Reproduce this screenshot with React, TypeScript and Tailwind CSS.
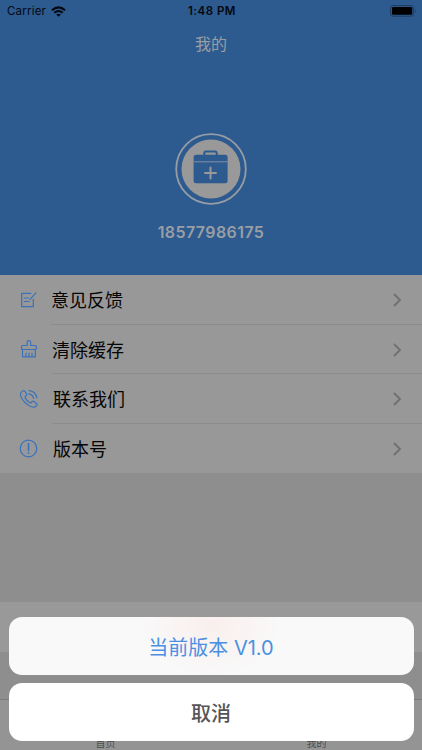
import type { ReactNode } from "react";

const line = {
  fill: "none",
  stroke: "#3a72ba",
  strokeWidth: 1.2,
  strokeLinecap: "round" as const,
  strokeLinejoin: "round" as const,
};

function FeedbackIcon() {
  return (
    <svg width="18" height="18" viewBox="0 0 18 18" {...line}>
      <path d="M10.800 2.300H1.700v13.400h11.600V8.400M4.300 7h4.200M4.300 10.500h5M15.900 1.900 10 8.300" />
    </svg>
  );
}

function BrushIcon() {
  return (
    <svg width="18" height="20" viewBox="0 0 18 20" {...line}>
      <path d="M7.200 6.500V3.200q0-1.600 1.700-1.600t1.700 1.600v3.300h4.700q1 0 1 1v2.200q0 .8-1 .8H2.500q-1 0-1-.8V7.500q0-1 1-1zM2.500 10.500v7.300h12.800v-7.300M6 14.200v3.600M9 14.200v3.600M12 14.200v3.600" />
    </svg>
  );
}

function PhoneIcon() {
  return (
    <svg width="20" height="20" viewBox="0 0 20 20" {...line}>
      <path d="M2.300 3.100 3.700 1.900q1.200-.8 2.200.4l1.700 2.500q.6 1-.3 1.800l-1 .9q-.6.600 0 1.600 1.500 2.700 4.200 4.500 1 .6 1.700-.1l.9-.9q.9-.7 1.800-.1l2.600 1.900q1 .9.200 2l-1.100 1.100q-1.600 1.300-4.300.3Q5.300 14.800 1.900 7.800 .8 4.800 2.300 3.100zM10 1.600q6.600.5 7.900 7.300M9.800 4.800q4 .4 4.900 4.700" />
    </svg>
  );
}

function InfoIcon() {
  return (
    <svg width="19" height="19" viewBox="0 0 19 19" {...line}>
      <circle cx="9.500" cy="9.500" r="8.300" />
      <path d="M9.500 4.600v7M9.500 13.900v.3" strokeWidth="1.600" />
    </svg>
  );
}

function Row({ icon, label, pad, last }: { icon: ReactNode; label: string; pad: string; last?: boolean }) {
  return (
    <div className="flex h-[49.500px] items-stretch">
      <div className="flex w-[52px] shrink-0 items-center justify-center pl-[5px]">{icon}</div>
      <div className={`flex flex-1 items-center justify-between pr-[20px] ${pad} ${last ? "" : "border-b border-[#8c8c8d]"}`}>
        <span className="pt-[4px] text-[18px] leading-none text-[#050505]">{label}</span>
        <svg className="mt-[2px]" width="10" height="14" viewBox="0 0 10 14" fill="none" stroke="#707071" strokeWidth="1.800">
          <path d="m2 1 6 6-6 6" />
        </svg>
      </div>
    </div>
  );
}

function StatusBar() {
  return (
    <div className="grid h-[22px] grid-cols-3 items-center pr-[5px] pl-[7px] text-[11.500px] text-[#03080f]">
      <div className="flex items-center gap-[5px]">
        <span className="pt-[2px] tracking-[0.200px]">Carrier</span>
        <svg width="15" height="11" viewBox="0 0 15 11" fill="none" stroke="#03080f" strokeWidth="2">
          <path d="M.9 4.200q6.600-5.600 13.200 0M3.300 6.800q4.200-3.600 8.400 0" />
          <path d="M7.500 10.800 5.200 8.500q2.300-1.700 4.600 0z" fill="#03080f" stroke="none" />
        </svg>
      </div>
      <span className="pt-[2px] text-center font-semibold tracking-[0.500px]">1:48 PM</span>
      <svg className="justify-self-end" width="27" height="12" viewBox="0 0 27 12">
        <rect x=".6" y=".6" width="23" height="10.600" rx="2.500" fill="none" stroke="#1d3b61" />
        <rect x="2" y="2" width="20.200" height="7.800" rx="1.200" fill="#000" />
        <path d="M25 4q1.500 2 0 4z" fill="#1d3b61" />
      </svg>
    </div>
  );
}

export default function App() {
  return (
    <div className="relative flex h-[750px] w-[422px] flex-col overflow-hidden bg-[#8e8e8e] font-[Inter,'Noto_Sans_CJK_SC',sans-serif]">
      <header className="flex h-[275px] shrink-0 flex-col bg-[#2d5a8f]">
        <StatusBar />
        <h1 className="flex h-[44px] items-center justify-center text-[16px] text-[#999ea4]">我的</h1>
        <div className="mt-[67px] flex justify-center">
          <svg width="72" height="72" viewBox="0 0 72 72">
            <circle cx="36" cy="36" r="34.800" fill="none" stroke="#979da4" strokeWidth="1.800" />
            <circle cx="36" cy="36" r="29.500" fill="#999" />
            <path d="M29.300 22v-2q0-1.500 1.500-1.500h9.400q1.500 0 1.500 1.500v2" fill="none" stroke="#2d5a8f" strokeWidth="2" />
            <rect x="18.600" y="21.800" width="34" height="28.500" rx="2.500" fill="#2d5a8f" />
            <path d="M18.600 28.800h34" stroke="#8291a3" strokeWidth="1" />
            <path d="M35.500 34.500v11M30 40h11" stroke="#999" strokeWidth="2" strokeLinecap="round" />
          </svg>
        </div>
        <p className="mt-[15px] text-center text-[16px] leading-[24px] font-semibold tracking-[0.400px] text-[#999ea4]">18577986175</p>
      </header>

      <main className="h-[198px] shrink-0 bg-[#989899]">
        <Row icon={<FeedbackIcon />} label="意见反馈" pad="-ml-px" />
        <Row icon={<BrushIcon />} label="清除缓存" pad="" />
        <Row icon={<PhoneIcon />} label="联系我们" pad="pl-[1px]" />
        <Row icon={<InfoIcon />} label="版本号" pad="pl-[1px]" last />
      </main>

      <div className="mt-[129px] h-[50px] shrink-0 bg-[#999]" />

      <nav className="mt-[47px] grid h-[51px] shrink-0 grid-cols-2 items-end border-t border-[#7c7c7c] bg-[#949494] text-center text-[10px] leading-[14px] text-[#4d4d4d]">
        <span>首页</span>
        <span>我的</span>
      </nav>

      <div className="absolute inset-x-[8.500px] top-[617px] flex flex-col gap-[8px] text-[20px]">
        <button className="h-[58px] rounded-[13px] bg-[#f9f9f9] bg-[radial-gradient(ellipse_70px_50px_at_50%_15%,#f9efed,#f9f9f9)] pt-[3px] text-[#4a90e2]">
          当前版本 V1.0
        </button>
        <button className="h-[58px] rounded-[13px] bg-white pt-[3px] font-medium text-[#555]">取消</button>
      </div>
    </div>
  );
}
